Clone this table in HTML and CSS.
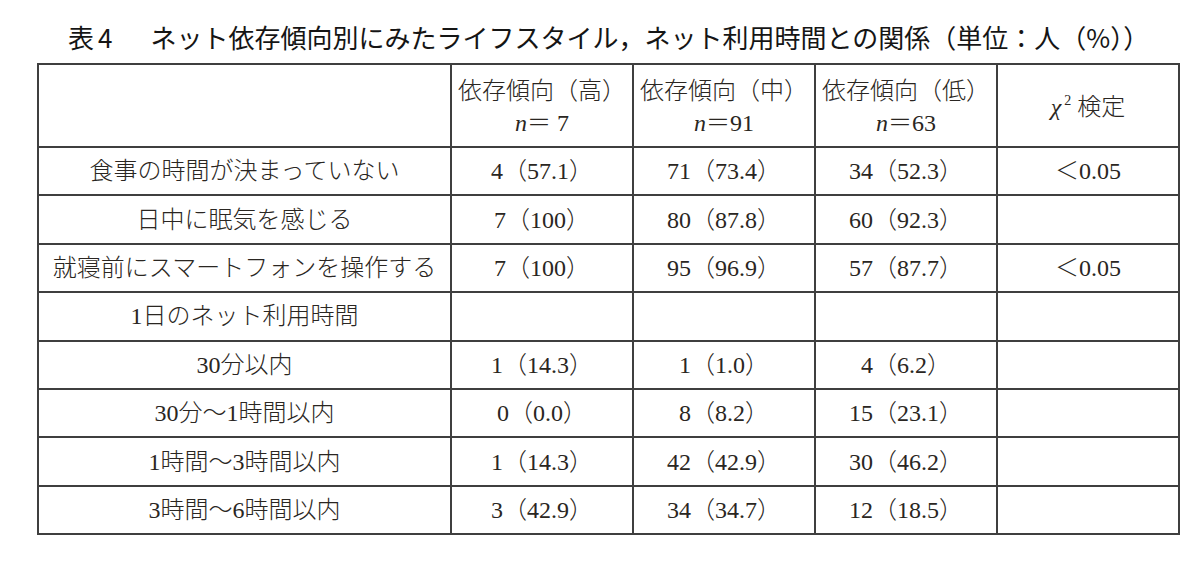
FILE: index.html
```html
<!DOCTYPE html>
<html lang="ja">
<head>
<meta charset="utf-8">
<title>表4</title>
<link rel="stylesheet" href="styles.css">
</head>
<body>
<div class="page">
  <h1 class="title"><span class="tno">表<span class="tdigit">4</span></span>ネット依存傾向別にみたライフスタイル，ネット利用時間との関係（単位：人（%））</h1>
  <table class="tbl">
    <colgroup>
      <col class="c-label">
      <col class="c-num">
      <col class="c-num">
      <col class="c-num">
      <col class="c-num">
    </colgroup>
    <thead>
      <tr class="head">
        <th></th>
        <th>依存傾向（高）<br><i class="n">n</i>＝ 7</th>
        <th>依存傾向（中）<br><i class="n">n</i>＝91</th>
        <th>依存傾向（低）<br><i class="n">n</i>＝63</th>
        <th><i class="chi">χ</i><sup class="sq">2</sup> 検定</th>
      </tr>
    </thead>
    <tbody>
      <tr><td>食事の時間が決まっていない</td><td>4（57.1）</td><td>71（73.4）</td><td>34（52.3）</td><td>＜0.05</td></tr>
      <tr><td>日中に眠気を感じる</td><td>7（100）</td><td>80（87.8）</td><td>60（92.3）</td><td></td></tr>
      <tr><td>就寝前にスマートフォンを操作する</td><td>7（100）</td><td>95（96.9）</td><td>57（87.7）</td><td>＜0.05</td></tr>
      <tr><td>1日のネット利用時間</td><td></td><td></td><td></td><td></td></tr>
      <tr><td>30分以内</td><td>1（14.3）</td><td>1（1.0）</td><td>4（6.2）</td><td></td></tr>
      <tr><td>30分～1時間以内</td><td>0（0.0）</td><td>8（8.2）</td><td>15（23.1）</td><td></td></tr>
      <tr><td>1時間～3時間以内</td><td>1（14.3）</td><td>42（42.9）</td><td>30（46.2）</td><td></td></tr>
      <tr><td>3時間～6時間以内</td><td>3（42.9）</td><td>34（34.7）</td><td>12（18.5）</td><td></td></tr>
    </tbody>
  </table>
</div>
</body>
</html>
```
FILE: styles.css
```css
html, body {
  margin: 0;
  padding: 0;
  background: #ffffff;
}

body {
  font-family: "Liberation Serif", "Noto Sans CJK JP", serif;
  color: #2a2622;
}

.page {
  padding: 20px 0 0 37px;
}

.title {
  margin: 0 0 0 31px;
  height: 43px;
  line-height: 34px;
  font-family: "Noto Sans CJK JP", sans-serif;
  font-size: 26px;
  font-weight: 400;
  color: #151515;
  white-space: nowrap;
}

.tno {
  margin-right: 38px;
}

.tdigit {
  margin-left: 4px;
}

.tbl {
  border-collapse: collapse;
  table-layout: fixed;
  width: 1142px;
  border: 2px solid #3a3a3a;
}

.c-label { width: 413px; }
.c-num { width: 182px; }

.tbl th,
.tbl td {
  border: 2px solid #3f3f3f;
  padding: 0;
  text-align: center;
  vertical-align: middle;
  font-size: 24px;
  font-weight: 300;
  white-space: nowrap;
}

.tbl th {
  height: 79px;
  line-height: 32px;
  padding-top: 2px;
}

.tbl td {
  height: 46.4px;
  line-height: 30px;
}

.n,
.chi {
  font-family: "Liberation Serif", serif;
  font-style: italic;
}

.sq {
  font-size: 14px;
  vertical-align: 10px;
  line-height: 0;
  margin-left: 3px;
}
```
